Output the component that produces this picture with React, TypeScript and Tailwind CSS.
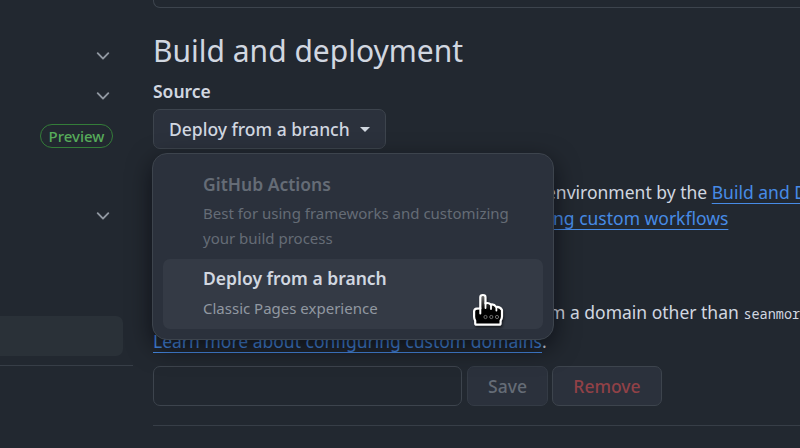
import React from "react";

const link =
  "text-[#478be6] underline decoration-1 underline-offset-[4px]";

function Chevron() {
  return (
    <svg width="20" height="20" viewBox="0 0 16 16" fill="#9198a1">
      <path d="M12.78 5.22a.749.749 0 0 1 0 1.06l-4.25 4.25a.749.749 0 0 1-1.06 0L3.22 6.28a.749.749 0 1 1 1.06-1.06L8 8.939l3.72-3.719a.749.749 0 0 1 1.06 0Z" />
    </svg>
  );
}

function HandCursor() {
  return (
    <svg
      className="absolute left-[471px] top-[292px] drop-shadow-[1px_2px_1px_rgba(0,0,0,0.5)]"
      width="34"
      height="36"
      viewBox="0 0 34 36"
    >
      <defs>
        <linearGradient id="hand" x1="0" y1="0" x2="0" y2="1">
          <stop offset="0" stopColor="#777" />
          <stop offset="0.5" stopColor="#000" />
        </linearGradient>
      </defs>
      <path
        d="M9.3 5.2Q9.3 3 11.9 3Q14.5 3 14.5 5.2V11.4Q17.5 10.2 19.8 12.6Q23 11.8 25.2 15Q29 14.4 31 18V24.5Q31 26.6 29.6 28.6V31.2Q29.6 32.7 28.2 32.7H5.6Q4.2 32.7 4.2 31.2V28.8Q3.1 26.8 3.1 24.8V19.6Q3.1 16.8 5.8 16.6L9.3 16.4Z"
        fill="url(#hand)"
        stroke="#fff"
        strokeWidth="2.2"
        strokeLinejoin="round"
      />
      <path d="M9.3 16V21.5" stroke="#fff" strokeWidth="2" strokeLinecap="round" />
      <path d="M14.5 11V16M20 12.6V17M25.4 15V18.5" stroke="#fff" strokeWidth="1.8" strokeLinecap="round" />
      <g fill="none" stroke="#888" strokeWidth="0.8">
        <circle cx="14.5" cy="25" r="1.6" />
        <circle cx="20.3" cy="25" r="1.6" />
        <circle cx="26" cy="25" r="1.6" />
      </g>
    </svg>
  );
}

function Sidebar() {
  return (
    <aside className="flex h-[366px] w-[133px] shrink-0 flex-col items-start border-b border-[#373e47]">
      <div className="mt-[36px] flex h-10 w-[113px] shrink-0 items-center justify-end">
        <Chevron />
      </div>
      <div className="flex h-10 w-[113px] shrink-0 items-center justify-end">
        <Chevron />
      </div>
      <div className="flex h-10 w-[113px] shrink-0 items-center justify-end">
        <span className="flex h-6 w-[73px] items-center justify-center rounded-full border border-[#347d39] text-[15px] font-medium text-[#57ab5a]">
          Preview
        </span>
      </div>
      <div className="mt-10 flex h-10 w-[113px] shrink-0 items-center justify-end">
        <Chevron />
      </div>
      <div className="mt-[80px] h-10 w-[123px] rounded-r-[7px] bg-[#2a3138]" />
    </aside>
  );
}

function SourceMenu() {
  return (
    <div className="absolute left-[152px] top-[153px] h-[187px] w-[402px] rounded-[15px] border border-[#3d444d] bg-[#2b313c] px-[10px] shadow-[0_8px_24px_rgba(1,4,9,0.6)]">
      <div className="h-[105px] px-10 pt-[17px] text-[#656c76]">
        <div className="text-[17.5px] font-semibold leading-[26px]">GitHub Actions</div>
        <div className="mt-[4px] w-[320px] text-[15px] leading-[25px]">
          Best for using frameworks and customizing your build process
        </div>
      </div>
      <div className="h-[70px] rounded-[7px] bg-[#343a45] px-10 pt-[6px]">
        <div className="text-[17.5px] font-semibold leading-[26px] text-[#d1d7e0]">
          Deploy from a branch
        </div>
        <div className="mt-[5px] text-[15px] leading-[25px] text-[#9198a1]">
          Classic Pages experience
        </div>
      </div>
    </div>
  );
}

export default function App() {
  return (
    <div className="relative flex h-[448px] w-[800px] overflow-hidden bg-[#222830] font-['Noto_Sans',sans-serif] text-[17.5px] text-[#d1d7e0]">
      <Sidebar />
      <main className="ml-5 flex w-[660px] shrink-0 flex-col whitespace-nowrap">
        <div className="h-2 rounded-bl-[7px] border-b border-l border-[#3d444d]" />
        <h2 className="mt-[20px] text-[30px] leading-[45px]">Build and deployment</h2>
        <h3 className="mt-[5px] text-[17.5px] font-semibold leading-[26px]">Source</h3>
        <button className="mt-[5px] flex h-10 w-[233px] items-center rounded-[7px] border border-[#3d444d] bg-[#2b313c] pl-[15px] font-medium">
          Deploy from a branch
          <span className="ml-[10px] border-x-[5px] border-t-[5px] border-x-transparent border-t-[#d1d7e0]" />
        </button>
        <div className="mt-[30px] leading-[26px]">
          <p className="pl-[393px]">
            environment by the <a className={link}>Build and D</a>
          </p>
          <p className="pl-[400px]">
            <a className={link}>ng custom workflows</a>
          </p>
        </div>
        <div className="mt-[67px] leading-[29px]">
          <p className="h-[29px] pl-[396px]">
            m a domain other than{" "}
            <code className="font-['Noto_Sans_Mono','DejaVu_Sans_Mono',monospace] text-[13.5px] leading-none">
              seanmor
            </code>
          </p>
          <p className="h-[29px]">
            <a className={link}>Learn more about configuring custom domains</a>.
          </p>
        </div>
        <div className="mt-[10px] flex h-10 shrink-0 font-medium">
          <div className="w-[309px] rounded-[7px] border border-[#3d444d]" />
          <button className="ml-[5px] w-[81px] rounded-[7px] border border-[#343b45] bg-[#2b313c] text-[#656c76]">
            Save
          </button>
          <button className="ml-[4px] w-[110px] rounded-[7px] border border-[#3d444d] bg-[#2b313c] text-[#914147]">
            Remove
          </button>
        </div>
        <div className="mt-[19px] border-t border-[#373e47]" />
      </main>
      <SourceMenu />
      <HandCursor />
    </div>
  );
}
